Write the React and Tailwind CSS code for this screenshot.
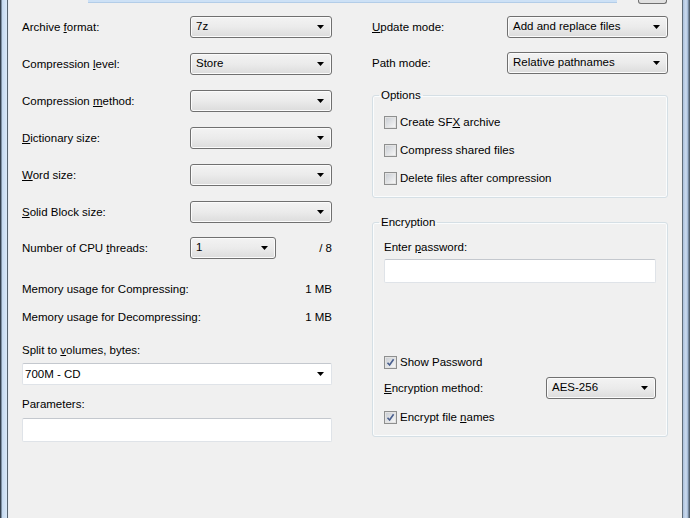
import React from "react";

const Arrow = () => (
  <svg width="7" height="4" viewBox="0 0 7 4" className="shrink-0">
    <polygon points="0,0 7,0 3.5,4" fill="#000" />
  </svg>
);

function Combo({ value = "", className = "" }) {
  return (
    <div
      className={`h-[22px] flex items-center justify-between pl-[5px] pr-[7px] border border-[#707070] rounded-[3px] bg-gradient-to-b from-[#f3f3f3] via-[#ebebeb] to-[#dcdcdc] shadow-[inset_0_0_0_1px_#fbfbfb] ${className}`}
    >
      <span className="leading-none">{value}</span>
      <Arrow />
    </div>
  );
}

function Row({ label, children }) {
  return (
    <div className="flex items-center justify-between">
      <span>{label}</span>
      {children}
    </div>
  );
}

function Check({ checked = false, children }) {
  return (
    <div className="h-[16px] flex items-center gap-[3px]">
      <span className="w-[13px] h-[13px] border border-[#8e8f8f] bg-[#f4f4f4] flex items-center justify-center shadow-[inset_0_0_0_1px_#e3e3e3]">
        <span className="w-[9px] h-[9px] bg-gradient-to-br from-[#cbcfd5] to-[#f6f6f6] flex items-center justify-center">
          {checked && (
            <svg width="9" height="9" viewBox="0 0 9 9">
              <path d="M1.5 4.8 L3.6 7 L7.6 1.2" stroke="#4a5f8e" strokeWidth="1.6" fill="none" />
            </svg>
          )}
        </span>
      </span>
      <span>{children}</span>
    </div>
  );
}

function Group({ title, children, className = "" }) {
  return (
    <fieldset className={`border border-[#d5dfe5] rounded-[3px] shadow-[inset_0_0_0_1px_#fafcfd] ${className}`}>
      <legend className="ml-[6px] px-[2px] leading-[16px]">{title}</legend>
      {children}
    </fieldset>
  );
}

export default function App() {
  return (
    <div className="w-[690px] h-[518px] flex overflow-hidden bg-[#f0f0f0] text-[11.5px] leading-[16px] text-black font-['Segoe_UI','Liberation_Sans',sans-serif]">
      {/* left window border */}
      <div className="w-[9px] shrink-0 bg-[linear-gradient(to_right,#34414f_0px,#34414f_1px,#8092a6_1px,#8092a6_2px,#c3d8ef_2px,#d9e8f8_7px,#56636f_7px,#56636f_8px,#e9eef4_8px)]" />

      <div className="flex-1 flex flex-col">
        {/* bottom edge of the archive name row */}
        <div className="h-[4px] flex">
          <div className="ml-[79px] w-[529px] h-[3px] bg-[#cde1f6] border-b border-[#b3cde8]" />
          <div className="ml-[21px] w-[29px] h-[4px] border border-t-0 border-[#707070] rounded-b-[3px] bg-[#e0e0e0]" />
        </div>

        <div className="flex pl-[13px] pt-[12px]">
          {/* left column */}
          <div className="w-[310px] flex flex-col">
            <div className="flex flex-col gap-[15px]">
              <Row label={<>Archive <u>f</u>ormat:</>}>
                <Combo value="7z" className="w-[142px]" />
              </Row>
              <Row label={<>Compression <u>l</u>evel:</>}>
                <Combo value="Store" className="w-[142px]" />
              </Row>
              <Row label={<>Compression <u>m</u>ethod:</>}>
                <Combo className="w-[142px]" />
              </Row>
              <Row label={<><u>D</u>ictionary size:</>}>
                <Combo className="w-[142px]" />
              </Row>
              <Row label={<><u>W</u>ord size:</>}>
                <Combo className="w-[142px]" />
              </Row>
              <Row label={<><u>S</u>olid Block size:</>}>
                <Combo className="w-[142px]" />
              </Row>
              <div className="flex items-center -mt-[1px]">
                <span className="w-[168px]">Number of CPU <u>t</u>hreads:</span>
                <Combo value="1" className="w-[86px]" />
                <span className="ml-auto">/ 8</span>
              </div>
            </div>

            <div className="mt-[22px] flex justify-between">
              <span>Memory usage for Compressing:</span>
              <span>1 MB</span>
            </div>
            <div className="mt-[12px] flex justify-between">
              <span>Memory usage for Decompressing:</span>
              <span>1 MB</span>
            </div>

            <div className="mt-[17px]">Split to <u>v</u>olumes, bytes:</div>
            <div className="mt-[5px] h-[22px] flex items-center justify-between pl-[2px] pr-[7px] bg-white border border-[#dfe3e8] border-t-[#c4c8ce] rounded-[2px]">
              <span>700M - CD</span>
              <Arrow />
            </div>

            <div className="mt-[11px]">Parameters:</div>
            <div className="mt-[6px] h-[24px] bg-white border border-[#dfe3e8] border-t-[#c4c8ce] rounded-[2px]" />
          </div>

          {/* right column */}
          <div className="ml-[40px] w-[296px] flex flex-col">
            <div className="flex items-center justify-between">
              <span><u>U</u>pdate mode:</span>
              <Combo value="Add and replace files" className="w-[161px]" />
            </div>
            <div className="mt-[14px] flex items-center justify-between">
              <span>Path mode:</span>
              <Combo value="Relative pathnames" className="w-[161px]" />
            </div>

            <Group title="Options" className="mt-[13px]">
              <div className="px-[11px] pt-[11px] pb-[11px] flex flex-col gap-[12px]">
                <Check>Create SF<u>X</u> archive</Check>
                <Check>Compress shared files</Check>
                <Check>Delete files after compression</Check>
              </div>
            </Group>

            <Group title="Encryption" className="mt-[16px]">
              <div className="px-[11px] pt-[9px] pb-[11px] flex flex-col">
                <div>Enter <u>p</u>assword:</div>
                <div className="mt-[4px] h-[24px] bg-white border border-[#dfe3e8] border-t-[#c4c8ce] rounded-[2px]" />
                <div className="mt-[71px]">
                  <Check checked>Show Password</Check>
                </div>
                <div className="mt-[7px] flex items-center justify-between">
                  <span><u>E</u>ncryption method:</span>
                  <Combo value="AES-256" className="w-[110px]" />
                </div>
                <div className="mt-[10px]">
                  <Check checked>Encrypt file <u>n</u>ames</Check>
                </div>
              </div>
            </Group>
          </div>
        </div>
      </div>

      {/* right window border */}
      <div className="w-[8px] shrink-0 bg-[linear-gradient(to_right,#5f6c78_0px,#5f6c78_1px,#a9bfdb_1px,#cddcef_4px,#9db4d1_6px,#52606e_7px)]" />
    </div>
  );
}
